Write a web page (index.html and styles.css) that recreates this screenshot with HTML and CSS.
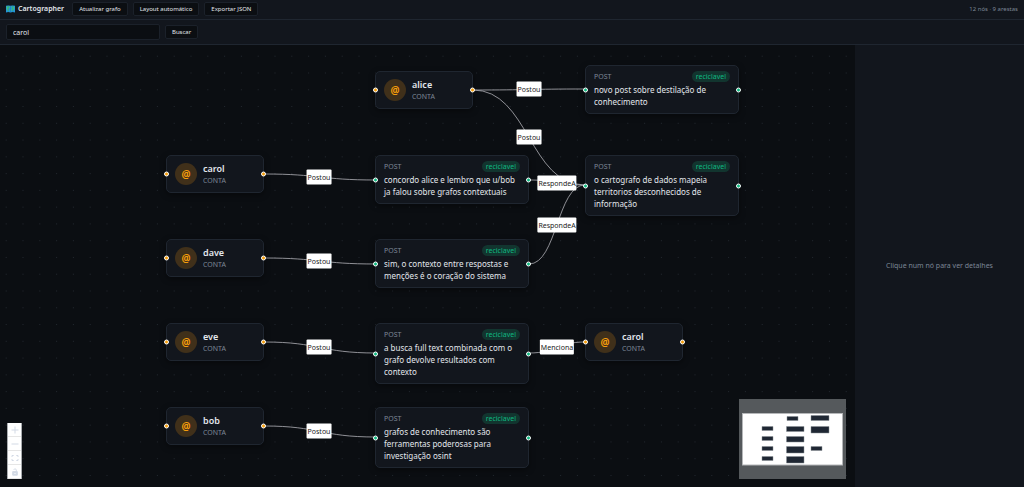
FILE: index.html
```html
<!DOCTYPE html>
<html lang="pt-BR">
<head>
<meta charset="utf-8">
<meta name="viewport" content="width=device-width, initial-scale=1">
<title>Cartographer</title>
<link rel="stylesheet" href="styles.css">
</head>
<body>
<header class="topbar">
  <h1 class="brand">
    <svg class="brand-icon" viewBox="0 0 8 7" aria-hidden="true"><path fill="#2497d8" d="M0 .7l2-.4 2 .4 2-.4 2 .4v5.800l-2-.4-2 .4-2-.4-2 .4z"/><path fill="#3fc47a" d="M.6 1.200l2.400-.3.300 1.300-1.200 1.300L2.800 5l-.8.7L.6 3.400zM4.800 1.100l2.400.3v2L5.600 5.400l-1-1.200.9-1z"/><path stroke="#176a9c" stroke-width=".3" d="M2 .3v5.800M4 .7v5.800M6 .3v5.800"/></svg>
    Cartographer
  </h1>
  <button class="btn" type="button">Atualizar grafo</button>
  <button class="btn" type="button">Layout automático</button>
  <button class="btn" type="button">Exportar JSON</button>
  <span class="stats">12 nós · 9 arestas</span>
</header>
<form class="searchbar">
  <input class="search-input" type="text" value="carol" aria-label="Buscar no grafo">
  <button class="btn" type="button">Buscar</button>
</form>
<div class="workspace">
  <main class="canvas">
    <svg class="edges" aria-hidden="true">
      <defs><pattern id="dots" x="14.6" y="19.6" width="16.8" height="16.77" patternUnits="userSpaceOnUse"><circle cx="8.4" cy="8.4" r=".45" fill="#3a424d"/></pattern></defs>
      <rect width="100%" height="100%" fill="url(#dots)"/>
      <g class="edge-lines">
        <path d="M473 45C529 45 529 44 585 44"/>
        <path d="M473 45C529 45 529 140 585 140"/>
        <path d="M529 135C557 135 557 140 585 140"/>
        <path d="M529 219C557 219 557 140 585 140"/>
        <path d="M264 129C320 129 320 135 376 135"/>
        <path d="M264 213C320 213 320 219 376 219"/>
        <path d="M264 297C320 297 320 308 376 308"/>
        <path d="M264 381C320 381 320 392 376 392"/>
        <path d="M529 308C557 308 557 297 585 297"/>
      </g>
    </svg>
    <span class="edge-label at-alice-novo">Postou</span>
    <span class="edge-label at-alice-carto">Postou</span>
    <span class="edge-label at-carol">Postou</span>
    <span class="edge-label at-dave">Postou</span>
    <span class="edge-label at-eve">Postou</span>
    <span class="edge-label at-bob">Postou</span>
    <span class="edge-label at-resp-a">RespondeA</span>
    <span class="edge-label at-resp-b">RespondeA</span>
    <span class="edge-label at-menciona">Menciona</span>

    <article class="node account col-2 row-1"><span class="avatar">@</span><div><h2 class="name">alice</h2><p class="kind">CONTA</p></div></article>
    <article class="node account col-1 row-2"><span class="avatar">@</span><div><h2 class="name">carol</h2><p class="kind">CONTA</p></div></article>
    <article class="node account col-1 row-3"><span class="avatar">@</span><div><h2 class="name">dave</h2><p class="kind">CONTA</p></div></article>
    <article class="node account col-1 row-4"><span class="avatar">@</span><div><h2 class="name">eve</h2><p class="kind">CONTA</p></div></article>
    <article class="node account col-1 row-5"><span class="avatar">@</span><div><h2 class="name">bob</h2><p class="kind">CONTA</p></div></article>
    <article class="node account col-3 row-4"><span class="avatar">@</span><div><h2 class="name">carol</h2><p class="kind">CONTA</p></div></article>

    <article class="node post col-3 row-0"><div class="post-head"><span class="kind">POST</span><span class="tag">reciclavel</span></div><p class="text">novo post sobre destilação de conhecimento</p></article>
    <article class="node post col-3 row-2"><div class="post-head"><span class="kind">POST</span><span class="tag">reciclavel</span></div><p class="text">o cartografo de dados mapeia territorios desconhecidos de informação</p></article>
    <article class="node post col-2 row-2"><div class="post-head"><span class="kind">POST</span><span class="tag">reciclavel</span></div><p class="text">concordo alice e lembro que u/bob ja falou sobre grafos contextuais</p></article>
    <article class="node post col-2 row-3"><div class="post-head"><span class="kind">POST</span><span class="tag">reciclavel</span></div><p class="text">sim, o contexto entre respostas e menções é o coração do sistema</p></article>
    <article class="node post col-2 row-4"><div class="post-head"><span class="kind">POST</span><span class="tag">reciclavel</span></div><p class="text">a busca full text combinada com o grafo devolve resultados com contexto</p></article>
    <article class="node post col-2 row-5"><div class="post-head"><span class="kind">POST</span><span class="tag">reciclavel</span></div><p class="text">grafos de conhecimento são ferramentas poderosas para investigação osint</p></article>

    <div class="controls">
      <button class="control" type="button" aria-label="Aproximar"><svg viewBox="0 0 8 8"><path d="M4 .5v7M.5 4h7"/></svg></button>
      <button class="control" type="button" aria-label="Afastar"><svg viewBox="0 0 8 8"><path d="M.5 4h7"/></svg></button>
      <button class="control" type="button" aria-label="Ajustar à tela"><svg viewBox="0 0 8 8"><path d="M1 3V1.500h1.700M5.300 1.500H7V3M7 5v1.500H5.300M2.700 6.500H1V5"/></svg></button>
      <button class="control" type="button" aria-label="Travar"><svg viewBox="0 0 8 8"><path class="lock-body" d="M1.700 3.600h4.600v3.600H1.700z"/><path d="M5.300 3.600V2.200a1.300 1.300 0 0 0-2.500-.5"/><path class="lock-hole" d="M4 5v1"/></svg></button>
    </div>
    <svg class="minimap" viewBox="0 0 107 80" role="img" aria-label="Minimapa">
      <rect width="107" height="80" fill="#55595c"/>
      <rect x="3.500" y="14.500" width="100" height="51.500" fill="#fff" stroke="#b5b7b9"/>
      <g fill="#1f2733" stroke="#8b9097" stroke-width=".5">
        <path d="M48 17.500h11v4H48zM72 16.500h18v5H72zM23 27.500h11v4H23zM47.500 27.500H65v5H47.500zM72 27.500h18v6.500H72zM23 37.500h11v4H23zM47.500 37.500H65v5.500H47.500zM23 47.500h11v4H23zM47.500 47.500H65v6.500H47.500zM72 47.500h11v4H72zM23 57.500h11v4H23zM47.500 57.500H65v6.500H47.500z"/>
      </g>
    </svg>
  </main>
  <aside class="details"><p>Clique num nó para ver detalhes</p></aside>
</div>
</body>
</html>
```
FILE: styles.css
```css
*, *::before, *::after { box-sizing: border-box; }

body {
  margin: 0;
  min-height: 100vh;
  display: flex;
  flex-direction: column;
  background: #0b0e12;
  color: #e2e6ec;
  font: 8px/12px "Noto Sans", "Open Sans", sans-serif;
}

h1, h2, p { margin: 0; }

.topbar, .searchbar {
  display: flex;
  align-items: center;
  gap: 5px;
  padding: 0 6px;
  background: #12161d;
  border-bottom: 1px solid #1f2630;
}
.topbar { height: 20px; padding-bottom: 2px; }
.searchbar { height: 25px; }

.brand {
  display: flex;
  align-items: center;
  gap: 3px;
  margin-right: 3px;
  font-size: 7px;
  font-weight: 600;
}
.brand-icon { width: 9px; height: 8px; }

.btn {
  height: 14px;
  padding: 0 6px;
  border: 1px solid #1b212a;
  border-radius: 2px;
  background: #0b0e12;
  color: #e2e6ec;
  font: 6px/12px "Noto Sans", "Open Sans", sans-serif;
}

.stats {
  margin-left: auto;
  color: #7c8696;
  font-size: 6px;
}

.search-input {
  width: 154px;
  height: 16px;
  padding: 0 6px;
  border: 1px solid #1b212a;
  border-radius: 2px;
  background: #0b0e12;
  color: #e2e6ec;
  font: 7px/12px "Noto Sans", "Open Sans", sans-serif;
}

.workspace {
  flex: 1;
  display: flex;
}
.canvas {
  position: relative;
  flex: 1;
  overflow: hidden;
}
.details {
  flex: 0 0 169px;
  display: grid;
  place-items: center;
  background: #12161d;
  color: #7c8696;
  font-size: 7px;
}

.edges {
  position: absolute;
  inset: 0;
  width: 100%;
  height: 100%;
}
.edge-lines {
  fill: none;
  stroke: #b1b1b7;
  stroke-width: .8;
}
.edge-label {
  position: absolute;
  transform: translate(-50%, -50%);
  padding: 0 1px;
  border-radius: 1px;
  background: #fff;
  color: #222;
  font-size: 7px;
  line-height: 15px;
}
.at-alice-novo { left: 529px; top: 44px; }
.at-alice-carto { left: 529px; top: 92px; }
.at-carol { left: 319px; top: 132px; }
.at-dave { left: 319px; top: 216px; }
.at-eve { left: 319px; top: 302px; }
.at-bob { left: 319px; top: 386px; }
.at-resp-a { left: 557px; top: 138px; }
.at-resp-b { left: 557px; top: 180px; }
.at-menciona { left: 557px; top: 302px; }

.node {
  position: absolute;
  border: 1px solid #1f2630;
  border-radius: 5px;
  background: #12161d;
  box-shadow: 0 2px 6px #0006;
}
.col-1 { left: 166px; }
.col-2 { left: 375px; }
.col-3 { left: 585px; }
.row-0 { top: 20px; }
.row-1 { top: 26px; }
.row-2 { top: 110px; }
.row-3 { top: 194px; }
.row-4 { top: 278px; }
.row-5 { top: 362px; }

.node::before, .node::after {
  content: "";
  position: absolute;
  top: 50%;
  width: 5px;
  height: 5px;
  border: 1px solid #fff;
  border-radius: 50%;
  background: #10b981;
  transform: translateY(-50%);
}
.node::before { left: -3px; }
.node::after { right: -3px; }
.account::before, .account::after { background: #f59e0b; }

.account {
  width: 98px;
  display: flex;
  align-items: center;
  gap: 6px;
  padding: 6px 8px;
}
.avatar {
  width: 22px;
  height: 22px;
  border-radius: 50%;
  background: #40301a;
  color: #f59e0b;
  font-size: 10px;
  font-weight: 700;
  line-height: 22px;
  text-align: center;
}
.name {
  font-size: 9px;
  font-weight: 600;
  line-height: 13px;
}
.kind {
  color: #7c8696;
  font-size: 7px;
  line-height: 11px;
}

.post {
  width: 154px;
  padding: 5px 8px;
}
.post-head {
  display: flex;
  justify-content: space-between;
  align-items: center;
  margin-bottom: 2px;
}
.tag {
  padding: 0 4px;
  border-radius: 6px;
  background: #12352f;
  color: #10b981;
  font-size: 7px;
  line-height: 11px;
}

.controls {
  position: absolute;
  left: 7px;
  bottom: 8px;
  width: 15px;
  border: 0 solid #a9acaf;
  border-width: 0 1px;
  background: #fff;
}
.control {
  display: grid;
  place-items: center;
  width: 100%;
  height: 14px;
  padding: 0;
  border: 0;
  border-bottom: 1px solid #e6e6e6;
  background: #fff;
}
.control svg {
  width: 8px;
  height: 8px;
  fill: none;
  stroke: #d3dae5;
}
.control .lock-body { fill: #d3dae5; }
.control .lock-hole { stroke: #fff; }

.minimap {
  position: absolute;
  right: 9px;
  bottom: 8px;
  width: 107px;
  height: 80px;
}
```
